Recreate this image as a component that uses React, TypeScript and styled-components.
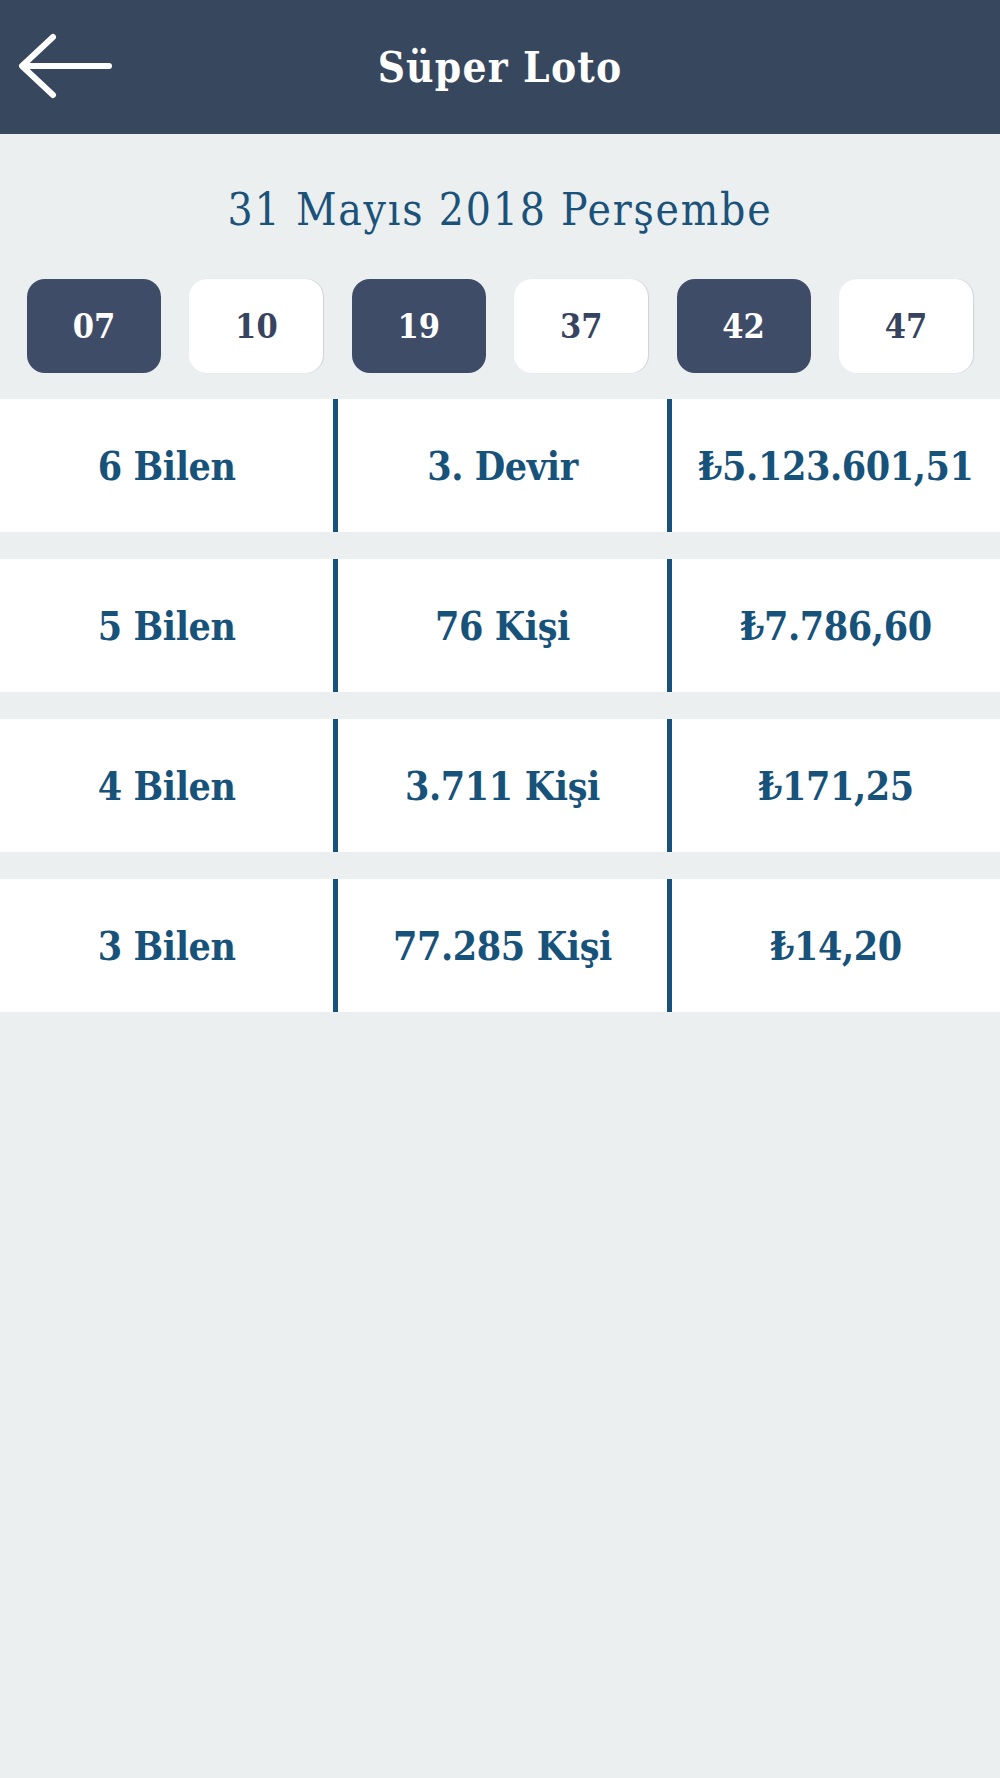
import styled, { createGlobalStyle } from "styled-components";

const GlobalStyle = createGlobalStyle`
  html, body {
    margin: 0;
    padding: 0;
    background: #eceff0;
  }
  body {
    font-family: "DejaVu Serif Condensed", "DejaVu Serif", "Liberation Serif", serif;
  }
`;

const Page = styled.div`
  min-height: 1778px;
  background: #eceff0;
  display: flex;
  flex-direction: column;
`;

const Header = styled.header`
  height: 134px;
  background: #37475e;
  display: flex;
  align-items: center;
  justify-content: center;
  position: relative;
`;

const BackButton = styled.button`
  position: absolute;
  left: 16px;
  top: 30px;
  width: 104px;
  height: 72px;
  padding: 0;
  border: 0;
  background: transparent;
  cursor: pointer;
`;

const Title = styled.h1`
  margin: 0;
  color: #ffffff;
  font-size: 42px;
  font-weight: bold;
  letter-spacing: 1.2px;
`;

const DateLine = styled.div`
  padding-top: 52px;
  line-height: 48px;
  text-align: center;
  color: #1b527a;
  font-size: 44px;
  letter-spacing: 1.8px;
`;

const Balls = styled.div`
  display: flex;
  justify-content: space-between;
  padding: 0 27px;
  margin-top: 45px;
`;

const Ball = styled.div<{ dark: boolean }>`
  width: 134px;
  height: 94px;
  border-radius: 18px;
  display: flex;
  align-items: center;
  justify-content: center;
  font-size: 34px;
  font-weight: bold;
  background: ${(p) => (p.dark ? "#3e4c68" : "#ffffff")};
  color: ${(p) => (p.dark ? "#ffffff" : "#37445f")};
  box-shadow: ${(p) => (p.dark ? "none" : "1px 0 1px rgba(0,0,0,0.12)")};
`;

const Table = styled.div`
  margin-top: 26px;
  display: flex;
  flex-direction: column;
  gap: 27px;
`;

const Row = styled.div`
  height: 133px;
  background: #ffffff;
  display: grid;
  grid-template-columns: 1fr 1fr 1fr;
`;

const Cell = styled.div<{ divided?: boolean }>`
  display: flex;
  align-items: center;
  justify-content: center;
  color: #17527a;
  font-size: 39px;
  font-weight: bold;
  letter-spacing: -0.4px;
  white-space: nowrap;
  border-left: ${(p) => (p.divided ? "5px solid #17527a" : "none")};
`;

const rows = [
  ["6 Bilen", "3. Devir", "₺5.123.601,51"],
  ["5 Bilen", "76 Kişi", "₺7.786,60"],
  ["4 Bilen", "3.711 Kişi", "₺171,25"],
  ["3 Bilen", "77.285 Kişi", "₺14,20"],
];

const numbers = ["07", "10", "19", "37", "42", "47"];

function BackArrow() {
  return (
    <svg width="104" height="72" viewBox="0 0 104 72">
      <g
        fill="none"
        stroke="#ffffff"
        strokeWidth="6"
        strokeLinecap="round"
        strokeLinejoin="round"
      >
        <path d="M37 7 L6 36 L37 65" />
        <path d="M7 36 L93 36" />
      </g>
    </svg>
  );
}

export default function App() {
  return (
    <Page>
      <GlobalStyle />
      <Header>
        <BackButton aria-label="Geri">
          <BackArrow />
        </BackButton>
        <Title>Süper Loto</Title>
      </Header>
      <DateLine>31 Mayıs 2018 Perşembe</DateLine>
      <Balls>
        {numbers.map((n, i) => (
          <Ball key={n} dark={i % 2 === 0}>
            {n}
          </Ball>
        ))}
      </Balls>
      <Table>
        {rows.map((r) => (
          <Row key={r[0]}>
            <Cell>{r[0]}</Cell>
            <Cell divided>{r[1]}</Cell>
            <Cell divided>{r[2]}</Cell>
          </Row>
        ))}
      </Table>
    </Page>
  );
}
